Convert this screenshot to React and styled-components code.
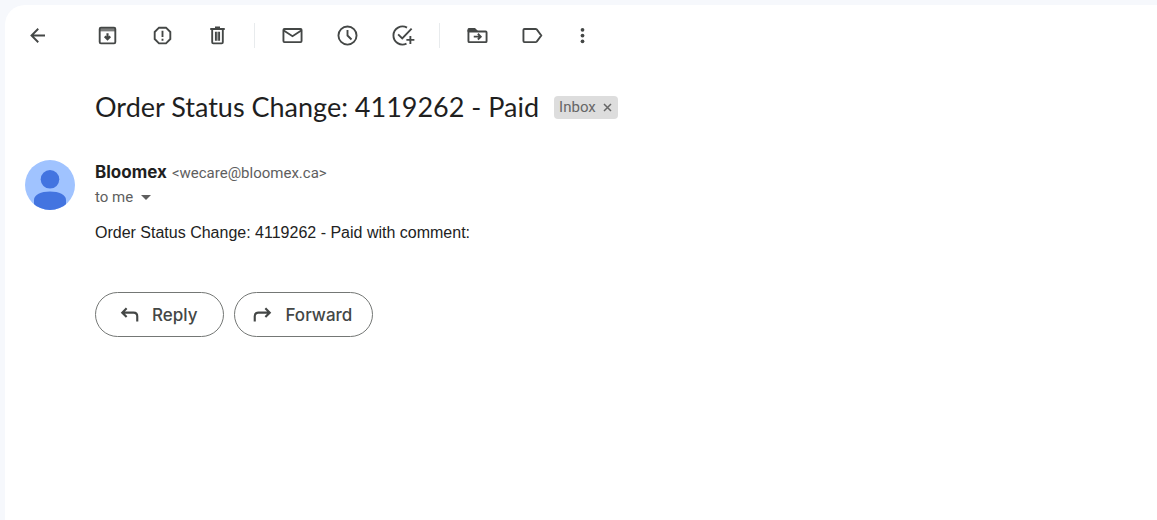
import React from 'react'
import styled, { createGlobalStyle } from 'styled-components'

const GlobalStyle = createGlobalStyle`
    * {
        box-sizing: border-box;
    }

    body {
        margin: 0;
        background: #f6f8fc;
        color: #1f1f1f;
        font-family: Roboto, sans-serif;
    }

    button {
        font-family: inherit;
        cursor: pointer;
    }
`;

const Panel = styled.main`
    min-height: calc(100vh - 5px);
    margin: 5px 0 0 5px;
    padding: 18px 20px;
    background: #fff;
    border-radius: 20px 0 0 0;
`;

const Toolbar = styled.div`
    display: flex;
    align-items: center;
`;

const ToolGroup = styled.div`
    display: flex;
    gap: 30px;
    margin-left: ${props => props.$indent || 0}px;
`;

const Divider = styled.span`
    width: 1px;
    height: 25px;
    margin: 0 25px 0 24px;
    background: #e8ebed;
`;

const IconButton = styled.button`
    display: flex;
    padding: 0;
    border: 0;
    background: none;
    color: #444746;
`;

const Svg = styled.svg`
    display: block;
    width: 25px;
    height: 25px;
    fill: none;
    stroke: currentColor;
    stroke-width: 1.5;
`;

const Subject = styled.header`
    display: flex;
    align-items: center;
    gap: 15px;
    margin: 41px 0 0 70px;
`;

const Title = styled.h1`
    margin: 0;
    font-family: Lato, sans-serif;
    font-size: 27px;
    font-weight: 400;
    line-height: 36px;
`;

const Chip = styled.span`
    display: flex;
    align-items: center;
    height: 23px;
    padding: 0 5px;
    gap: 6px;
    border-radius: 4px;
    background: #ddd;
    color: #666;
    font-size: 15px;
`;

const ChipClose = styled.button`
    display: flex;
    padding: 0;
    border: 0;
    background: none;
    color: #666;

    svg {
        width: 11px;
        height: 11px;
    }
`;

const Message = styled.article`
    display: flex;
    gap: 20px;
    margin-top: 35px;
`;

const Avatar = styled.svg`
    flex: none;
    width: 50px;
    height: 50px;
    border-radius: 50%;
`;

const Content = styled.div`
    flex: 1;
    min-width: 0;
`;

const Sender = styled.div`
    display: flex;
    align-items: baseline;
    gap: 5px;
    line-height: 24px;
`;

const Name = styled.span`
    font-family: Inter, sans-serif;
    font-size: 17px;
    font-weight: 700;
`;

const Address = styled.span`
    color: #5e5e5e;
    font-size: 15px;
`;

const Recipient = styled.button`
    display: flex;
    align-items: center;
    gap: 8px;
    padding: 0;
    border: 0;
    background: none;
    color: #5e5e5e;
    font-size: 15px;
    line-height: 24px;

    svg {
        width: 10px;
        height: 5px;
    }
`;

const Body = styled.p`
    margin: 12px 0 0;
    color: #222;
    font-family: "Liberation Sans", Arial, sans-serif;
    font-size: 16px;
    line-height: 24px;
`;

const Actions = styled.div`
    display: flex;
    gap: 10px;
    margin-top: 47px;
`;

const ActionButton = styled.button`
    display: flex;
    align-items: center;
    gap: 10px;
    height: 45px;
    padding: 0 ${props => props.$end}px 0 ${props => props.$start}px;
    border: 1px solid #747775;
    border-radius: 23px;
    background: #fff;
    color: #444746;
    font-family: Inter, sans-serif;
    font-size: 17px;
    font-weight: 500;
`;

const icons = {
    back: <path d="M16 10H5.5M10.6 4.6 5.2 10l5.4 5.4" />,
    archive: (
        <>
            <rect x="3.75" y="3.75" width="12.5" height="12.5" rx="1" />
            <path d="M4 5.6h12" strokeWidth="2.2" opacity=".7" />
            <path d="M10 8.2v5M7.8 10.7l2.2 2.2 2.2-2.2" strokeWidth="1.7" />
        </>
    ),
    spam: (
        <>
            <path d="M7.2 3.75h5.6l3.45 3.45v5.6l-3.45 3.45H7.2L3.75 12.8V7.2z" />
            <path d="M10 6.2v4.9M10 12.6v1.5" />
        </>
    ),
    trash: (
        <>
            <path d="M4.2 4.75h11.6M8 3.6h4" />
            <path d="M5.75 5v10.4c0 .5.3.85.85.85h6.8c.55 0 .85-.35.85-.85V5" />
            <path d="M8.7 7v7.2M11.3 7v7.2" />
            <path d="M10 7v7.2" opacity=".5" />
        </>
    ),
    mail: (
        <>
            <rect x="2.75" y="4.75" width="14.5" height="10.5" rx=".8" />
            <path d="m3 6 7 4.6L17 6" />
        </>
    ),
    clock: (
        <>
            <circle cx="10" cy="10" r="7.25" />
            <path d="M10 5.6V10l3.2 3.2" />
        </>
    ),
    task: (
        <>
            <path d="M13.6 3.7A7.25 7.25 0 1 0 13.2 16.5" />
            <path d="m6.5 9.1 3.3 3.3 7.5-7.9M16.3 10.3v6.4M13.1 13.5h6.4" />
        </>
    ),
    move: (
        <>
            <path d="M2.75 5.5v9c0 .5.3.75.75.75h13c.5 0 .75-.3.75-.75v-7c0-.5-.3-.75-.75-.75H3" />
            <path d="M2 6.9V5.3C2 4.5 2.6 4 3.4 4H8l2 2v.9z" fill="currentColor" stroke="none" />
            <path d="M7 10.9h5.3M10.3 8.6l2.3 2.3-2.3 2.3" />
        </>
    ),
    label: <path d="M3.6 4.75h8.9c.4 0 .7.2.9.4L17 10l-3.6 4.85c-.2.2-.5.4-.9.4H3.6c-.5 0-.85-.35-.85-.85V5.6c0-.5.35-.85.85-.85z" />,
    more: (
        <g fill="currentColor" stroke="none">
            <circle cx="10" cy="5.4" r="1.5" />
            <circle cx="10" cy="10" r="1.5" />
            <circle cx="10" cy="14.6" r="1.5" />
        </g>
    ),
    reply: <path d="M7.7 5 4.2 8.5 7.7 12M4.6 8.5h8.7c1.7 0 2.9 1.2 2.9 2.9v4.2" strokeWidth="1.7" />,
    forward: <path d="m12.3 5 3.5 3.5-3.5 3.5M15.4 8.5H6.7c-1.7 0-2.9 1.2-2.9 2.9v4.2" strokeWidth="1.7" />,
}

function Icon({ name }) {
    return <Svg viewBox="0 0 20 20" aria-hidden="true">{icons[name]}</Svg>
}

function Tool({ icon, label }) {
    return (
        <IconButton type="button" aria-label={label}>
            <Icon name={icon} />
        </IconButton>
    )
}

export default function App() {
    return (
        <>
            <GlobalStyle />
            <Panel>
                <Toolbar>
                    <Tool icon="back" label="Back to Inbox" />
                    <ToolGroup $indent={45}>
                        <Tool icon="archive" label="Archive" />
                        <Tool icon="spam" label="Report spam" />
                        <Tool icon="trash" label="Delete" />
                    </ToolGroup>
                    <Divider />
                    <ToolGroup>
                        <Tool icon="mail" label="Mark as unread" />
                        <Tool icon="clock" label="Snooze" />
                        <Tool icon="task" label="Add to Tasks" />
                    </ToolGroup>
                    <Divider />
                    <ToolGroup>
                        <Tool icon="move" label="Move to" />
                        <Tool icon="label" label="Labels" />
                    </ToolGroup>
                    <ToolGroup $indent={25}>
                        <Tool icon="more" label="More" />
                    </ToolGroup>
                </Toolbar>

                <Subject>
                    <Title>Order Status Change: 4119262 - Paid</Title>
                    <Chip>
                        Inbox
                        <ChipClose type="button" aria-label="Remove label Inbox">
                            <svg viewBox="0 0 11 11" fill="none" stroke="currentColor" strokeWidth="1.5">
                                <path d="m2 2 7 7M9 2 2 9" />
                            </svg>
                        </ChipClose>
                    </Chip>
                </Subject>

                <Message>
                    <Avatar viewBox="0 0 50 50" aria-hidden="true">
                        <rect width="50" height="50" fill="#a0c3ff" />
                        <circle cx="25" cy="19.3" r="9.3" fill="#4374e0" />
                        <path d="M9 50V40c0-5 7-8.4 16-8.4S41 35 41 40v10z" fill="#4374e0" />
                    </Avatar>
                    <Content>
                        <Sender>
                            <Name>Bloomex</Name>
                            <Address>&lt;wecare@bloomex.ca&gt;</Address>
                        </Sender>
                        <Recipient type="button" aria-label="Show details">
                            to me
                            <svg viewBox="0 0 10 5" fill="currentColor"><path d="M0 0h10L5 5z" /></svg>
                        </Recipient>
                        <Body>Order Status Change: 4119262 - Paid with comment:</Body>
                        <Actions>
                            <ActionButton type="button" $start={21} $end={26}>
                                <Icon name="reply" />
                                Reply
                            </ActionButton>
                            <ActionButton type="button" $start={15} $end={20}>
                                <Icon name="forward" />
                                Forward
                            </ActionButton>
                        </Actions>
                    </Content>
                </Message>
            </Panel>
        </>
    )
}
